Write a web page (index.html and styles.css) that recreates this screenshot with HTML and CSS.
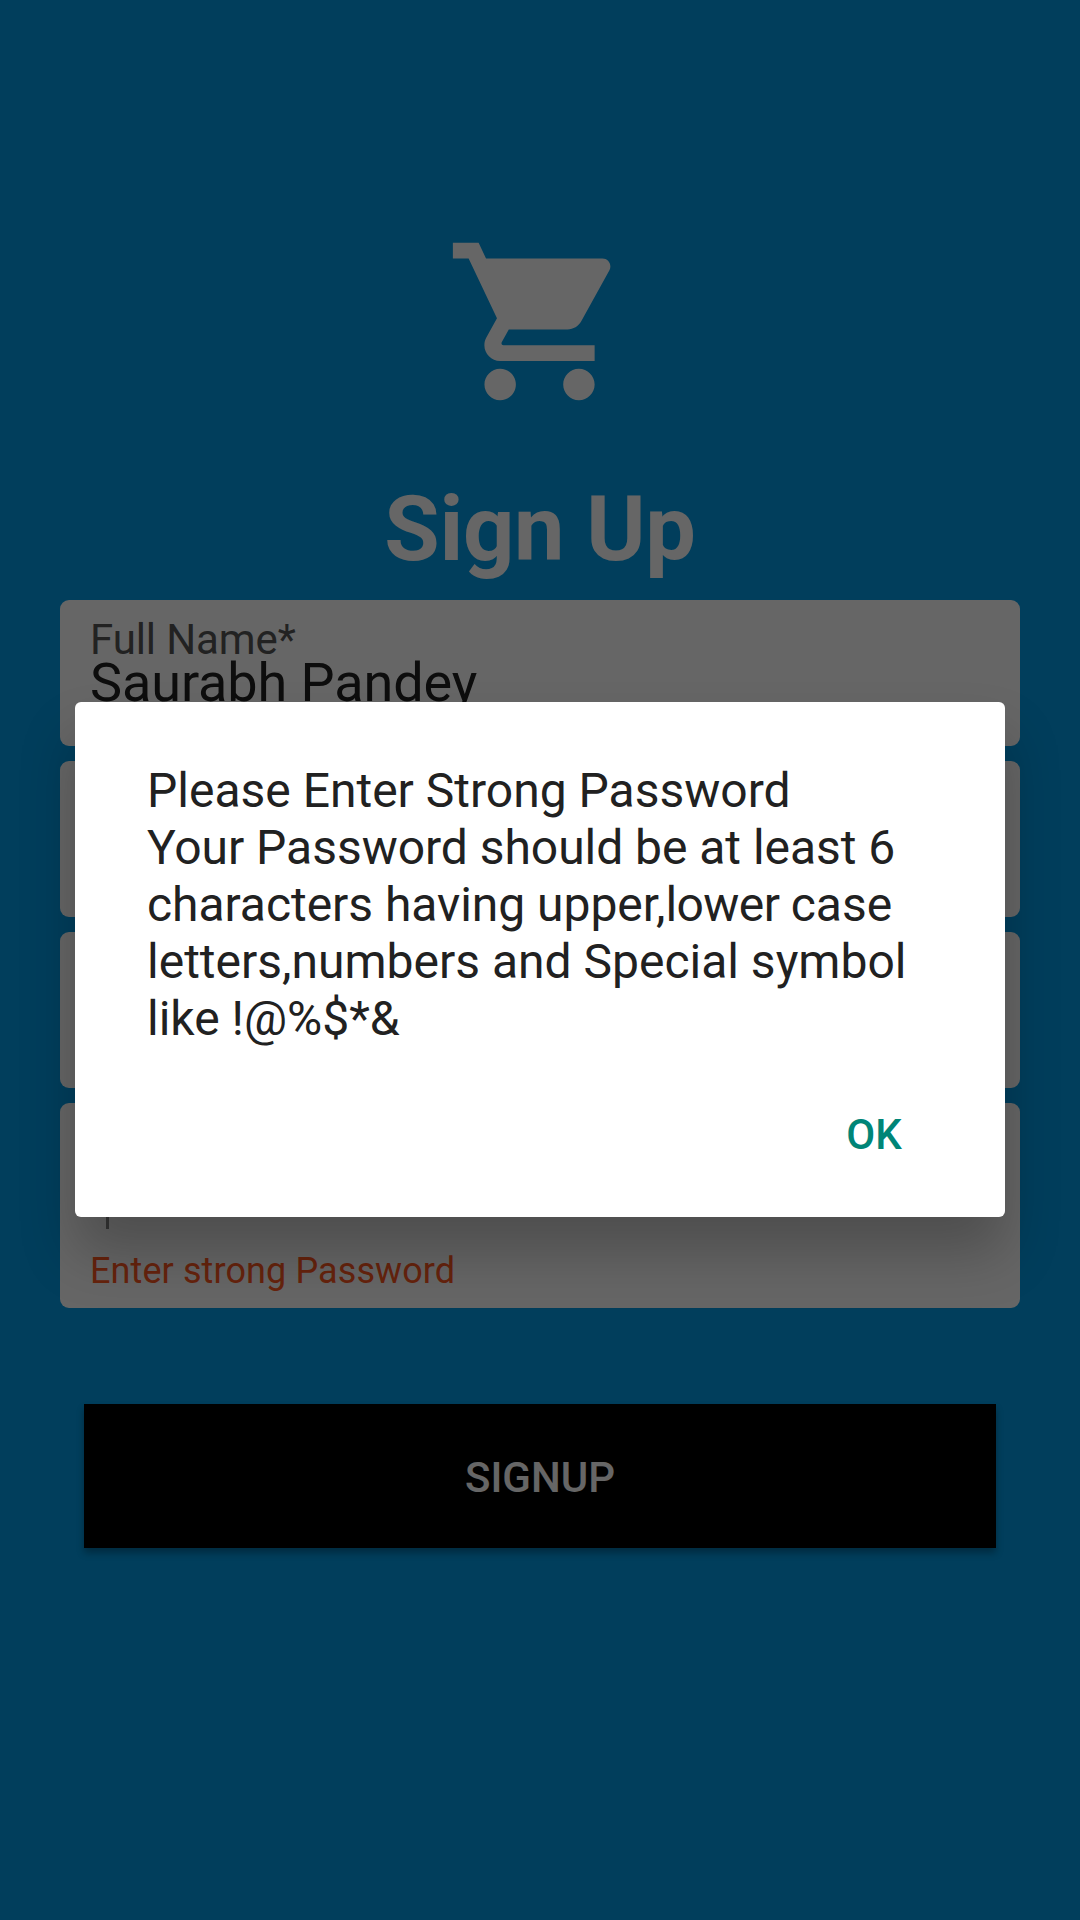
FILE: index.html
```html
<!DOCTYPE html>
<html lang="en">
<head>
<meta charset="utf-8">
<title>Sign Up</title>
<link rel="stylesheet" href="styles.css">
</head>
<body>
<main class="screen">
  <svg class="cart" viewBox="0 0 24 24" aria-hidden="true"><path d="M7 18c-1.1 0-1.99.9-1.99 2S5.9 22 7 22s2-.9 2-2-.9-2-2-2zM1 2v2h2l3.6 7.59-1.35 2.45c-.16.28-.25.61-.25.96 0 1.1.9 2 2 2h12v-2H7.42c-.14 0-.25-.11-.25-.25l.03-.12.9-1.63h7.45c.75 0 1.41-.41 1.75-1.03l3.58-6.49c.08-.14.12-.31.12-.48 0-.55-.45-1-1-1H5.21l-.94-2H1zm16 16c-1.1 0-1.99.9-1.99 2s.89 2 1.99 2 2-.9 2-2-.9-2-2-2z"/></svg>
  <h1 class="title">Sign Up</h1>
  <form class="form">
    <div class="field field-name">
      <span class="label">Full Name*</span>
      <span class="value">Saurabh Pandey</span>
    </div>
    <div class="field"></div>
    <div class="field"></div>
    <div class="field field-password">
      <span class="cursor"></span>
      <span class="error">Enter strong Password</span>
    </div>
    <button class="signup" type="button">SIGNUP</button>
  </form>
</main>
<div class="overlay">
  <section class="dialog" role="alertdialog">
    <p class="message">Please Enter Strong Password<br><span class="tight">Your Password should be at least 6<br>characters having upper,</span><span class="tighter">lower </span>case<br>letters,numbers and Special symbol<br>like !@%$*&amp;</p>
    <button class="ok" type="button">OK</button>
  </section>
</div>
</body>
</html>
```
FILE: styles.css
```css
* {
  box-sizing: border-box;
}

body {
  margin: 0;
  font-family: Roboto, sans-serif;
}

button {
  border: 0;
  font: inherit;
}

.screen {
  display: flex;
  flex-direction: column;
  align-items: center;
  height: 1920px;
  padding-top: 227px;
  background: #039be5;
}

.cart {
  flex: none;
  width: 189px;
  height: 189px;
  margin-right: 1px;
  fill: #fff;
}

.title {
  margin: 61px 0 0;
  height: 123px;
  font-size: 90px;
  font-weight: 700;
  line-height: 106px;
  letter-spacing: -0.3px;
  color: #fff;
}

.form {
  display: flex;
  flex-direction: column;
  gap: 15px;
  width: 960px;
}

.field {
  display: flex;
  flex-direction: column;
  height: 156px;
  padding: 0 30px;
  border-radius: 9px;
  background: #fff;
}

.field-name {
  height: 146px;
  padding-top: 15px;
}

.label {
  font-size: 42px;
  line-height: 50px;
  letter-spacing: -0.1px;
  color: #555;
}

.value {
  font-size: 54px;
  line-height: 64px;
  margin-top: -14px;
  letter-spacing: -0.1px;
  color: #212121;
}

.field-password {
  height: 205px;
  padding-top: 62px;
}

.cursor {
  width: 3px;
  height: 64px;
  margin-left: 16px;
  background: #888;
}

.error {
  margin-top: 21px;
  font-size: 36px;
  line-height: 42px;
  letter-spacing: 0.1px;
  color: #ff5722;
}

.signup {
  height: 144px;
  margin: 81px 24px 0;
  padding: 2px 0 0;
  background: #000;
  color: #fff;
  font-size: 42px;
  font-weight: 500;
  box-shadow: 0 5px 7px rgba(0, 0, 0, 0.3);
}

.overlay {
  position: absolute;
  inset: 0 0 auto;
  height: 1920px;
  padding: 702px 75px 0;
  background: rgba(0, 0, 0, 0.6);
}

.dialog {
  display: flex;
  flex-direction: column;
  height: 515px;
  padding: 60px 72px 0;
  border-radius: 6px;
  background: #fff;
  box-shadow: 0 36px 56px rgba(0, 0, 0, 0.24);
}

.message {
  margin: 0;
  font-size: 48px;
  line-height: 57px;
  white-space: nowrap;
  color: #212121;
}

.tight {
  letter-spacing: -0.04px;
}

.tighter {
  letter-spacing: -0.6px;
}

.ok {
  align-self: flex-end;
  width: 120px;
  height: 108px;
  margin-top: 33px;
  margin-right: -1px;
  padding: 0;
  background: none;
  color: #008577;
  font-size: 42px;
  font-weight: 500;
}
```
